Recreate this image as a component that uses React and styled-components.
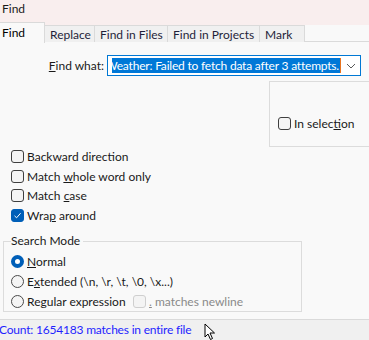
import React from 'react'
import styled, { createGlobalStyle } from 'styled-components'

const Global = createGlobalStyle`
  html, body { margin: 0; padding: 0; background: #f9f9f9; }
  body { font-family: Lato, 'Noto Sans', sans-serif; font-size: 12px; color: #1a1a1a; }
  u { text-underline-offset: 1px; }
`

const Window = styled.div`
  position: relative;
  width: 369px;
  height: 340px;
  overflow: hidden;
  display: flex;
  flex-direction: column;
  background: #f9f9f9;
  & > * { flex-shrink: 0; }
`

const TitleBar = styled.div`
  height: 22px;
  background: #f9eeee;
  padding-left: 2px;
  line-height: 17px;
`

const TabStrip = styled.div`
  height: 21px;
  display: flex;
  align-items: flex-start;
  background: linear-gradient(#f9eeee 0 3px, #f9f9f9 3px);
  position: relative;
  &::after {
    content: '';
    position: absolute;
    left: 44px;
    right: 0;
    bottom: 1px;
    height: 1px;
    background: #dadada;
  }
`

const Tab = styled.div`
  box-sizing: border-box;
  width: ${p => p.$w}px;
  height: ${p => (p.$active ? 21 : 17)}px;
  margin-top: ${p => (p.$active ? 0 : 3)}px;
  margin-left: ${p => (p.$first ? 0 : -1)}px;
  background: ${p => (p.$active ? '#f9f9f9' : '#f0f0f0')};
  border: 1px solid #dadada;
  border-left: ${p => (p.$active ? 'none' : '1px solid #dadada')};
  border-bottom: none;
  padding: ${p => (p.$active ? '2px 0 0 2px' : '0 0 0 5px')};
  line-height: ${p => (p.$active ? '16px' : '17px')};
  white-space: nowrap;
  color: ${p => (p.$active ? '#000' : '#1f1f3a')};
  position: relative;
  z-index: 1;
`

const Body = styled.div`
  flex: 1;
  display: flex;
  flex-direction: column;
  padding-top: 12px;
  & > * { flex-shrink: 0; }
`

const FindRow = styled.div`
  display: flex;
  align-items: center;
  height: 21px;
  padding-left: 44px;
`

const Label = styled.label`
  width: 60px;
  text-align: right;
  margin-right: 3px;
  white-space: nowrap;
`

const Combo = styled.div`
  box-sizing: border-box;
  width: 254px;
  height: 21px;
  border: 1px solid #0078d4;
  background: #fff;
  display: flex;
  align-items: center;
`

const ComboText = styled.div`
  width: 229px;
  margin-left: 4px;
  overflow: hidden;
  white-space: nowrap;
  display: flex;
  justify-content: flex-end;
  align-items: center;
  height: 15px;
`

const Selected = styled.span`
  flex-shrink: 0;
  background: #0078d7;
  color: #fff;
  line-height: 15px;
  letter-spacing: -0.2px;
  padding-right: 1px;
  border-right: 1px solid #e8731f;
`

const ChevronWrap = styled.div`
  flex: 1;
  display: flex;
  justify-content: center;
  align-items: center;
`

const SelectionBox = styled.div`
  box-sizing: border-box;
  margin-top: 5px;
  margin-left: 269px;
  width: 120px;
  height: 66px;
  border: 1px solid #dcdcdc;
  padding: 35px 0 0 8px;
`

const Options = styled.div`
  padding-left: 11px;
  display: flex;
  flex-direction: column;
`

const Row = styled.div`
  display: flex;
  align-items: center;
  height: ${p => p.$h || 19.5}px;
  margin-top: ${p => p.$mt || 0}px;
`

const Box = styled.span`
  box-sizing: border-box;
  width: 13px;
  height: 13px;
  margin-right: 3px;
  border-radius: 3px;
  border: 1px solid ${p => (p.$checked ? '#005fb8' : p.$disabled ? '#cfcfcf' : '#3f3f3f')};
  background: ${p => (p.$checked ? '#005fb8' : '#f4f4f4')};
  display: inline-flex;
  align-items: center;
  justify-content: center;
  flex-shrink: 0;
`

const Radio = styled.span`
  box-sizing: border-box;
  width: 13px;
  height: 13px;
  margin-right: 3px;
  border-radius: 50%;
  border: ${p => (p.$checked ? '4px solid #005fb8' : '1px solid #4a4a4a')};
  background: ${p => (p.$checked ? '#fff' : '#f4f4f4')};
  flex-shrink: 0;
`

const RadioLabel = styled.span`
  width: ${p => (p.$w ? `${p.$w}px` : 'auto')};
  white-space: nowrap;
`

const Group = styled.fieldset`
  box-sizing: border-box;
  margin: 10px 0 0 3px;
  width: 299px;
  height: 77px;
  border: 1px solid #dcdcdc;
  padding: 0 0 0 7px;
  display: flex;
  flex-direction: column;
`

const Legend = styled.legend`
  padding: 0 3px 0 0;
  line-height: 12px;
`

const DisabledText = styled.span`
  color: #8a8a8a;
`

const StatusBar = styled.div`
  margin-top: auto;
  height: 20px;
  border-top: 1px solid #dadada;
  background: #f0f0f0;
  color: #1f1fff;
  line-height: 20px;
  letter-spacing: -0.2px;
  margin-left: -1px;
  position: relative;
`

const Cursor = styled.svg`
  position: absolute;
  left: 205px;
  top: 3px;
`

const Check = () => (
  <svg width="9" height="9" viewBox="0 0 9 9">
    <path d="M1.5 4.8 L3.6 6.8 L7.6 2.2" fill="none" stroke="#fff" strokeWidth="1" />
  </svg>
)

const Checkbox = ({ checked, disabled, children }) => (
  <>
    <Box $checked={checked} $disabled={disabled}>{checked && <Check />}</Box>
    {disabled ? <DisabledText>{children}</DisabledText> : <span>{children}</span>}
  </>
)

const tabs = [
  { label: 'Find', w: 45, active: true },
  { label: 'Replace', w: 51 },
  { label: 'Find in Files', w: 74 },
  { label: 'Find in Projects', w: 93 },
  { label: 'Mark', w: 46 },
]

export default function App() {
  return (
    <Window>
      <Global />
      <TitleBar>Find</TitleBar>
      <TabStrip>
        {tabs.map((t, i) => (
          <Tab key={t.label} $w={t.w} $active={t.active} $first={i === 0}>{t.label}</Tab>
        ))}
      </TabStrip>
      <Body>
        <FindRow>
          <Label><u>F</u>ind what:</Label>
          <Combo>
            <ComboText>
              <Selected>Weather: Failed to fetch data after 3 attempts.</Selected>
            </ComboText>
            <ChevronWrap>
              <svg width="10" height="6" viewBox="0 0 10 6">
                <path d="M1 1 L5 5 L9 1" fill="none" stroke="#5a5a5a" strokeWidth="1" />
              </svg>
            </ChevronWrap>
          </Combo>
        </FindRow>
        <SelectionBox>
          <Row $h={13}>
            <Checkbox>In selec<u>t</u>ion</Checkbox>
          </Row>
        </SelectionBox>
        <Options>
          <Row><Checkbox>Backward direction</Checkbox></Row>
          <Row><Checkbox>Match <u>w</u>hole word only</Checkbox></Row>
          <Row><Checkbox>Match <u>c</u>ase</Checkbox></Row>
          <Row><Checkbox checked>Wra<u>p</u> around</Checkbox></Row>
        </Options>
        <Group>
          <Legend>Search Mode</Legend>
          <Row $h={19} $mt={5}><Radio $checked /><RadioLabel><u>N</u>ormal</RadioLabel></Row>
          <Row $h={21}><Radio /><RadioLabel>E<u>x</u>tended (\n, \r, \t, \0, \x...)</RadioLabel></Row>
          <Row $h={18}>
            <Radio /><RadioLabel $w={106}>Re<u>g</u>ular expression</RadioLabel>
            <Checkbox disabled><u>.</u> matches newline</Checkbox>
          </Row>
        </Group>
        <StatusBar>
          Count: 1654183 matches in entire file
          <Cursor width="14" height="18" viewBox="0 0 14 18">
            <path d="M1 1 L1 14 L4 11 L6.5 16.5 L8.5 15.5 L6 10 L10.5 10 Z" fill="#fff" stroke="#000" strokeWidth="1" strokeLinejoin="round" />
          </Cursor>
        </StatusBar>
      </Body>
    </Window>
  )
}
